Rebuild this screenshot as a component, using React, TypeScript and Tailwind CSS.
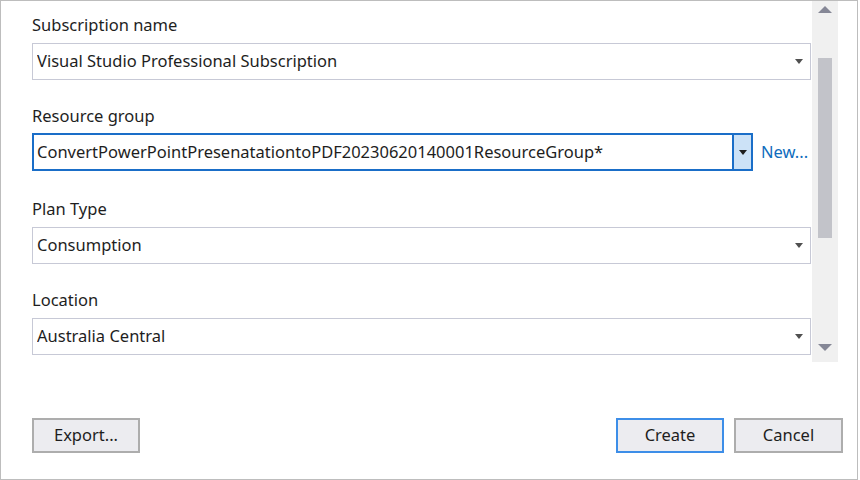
const font = "font-['Noto_Sans','Open_Sans',sans-serif]";

function Caret({ className = "" }: { className?: string }) {
  return (
    <svg width="8" height="5" viewBox="0 0 8 5" className={className}>
      <path d="M0 0H8L4 5Z" fill="currentColor" />
    </svg>
  );
}

function Field({ label, value, className = "" }: { label: string; value: string; className?: string }) {
  return (
    <div className={`flex flex-col ${className}`}>
      <div className="h-[22px] leading-[22px] mb-[7px] text-[16.5px] text-[#1e1e1e]">{label}</div>
      <div className="h-[37px] flex items-center border border-[#c7c9d6] bg-white pl-[4px] pr-[6px]">
        <span className="flex-1 text-[16.5px] text-[#1e1e1e] truncate">{value}</span>
        <Caret className="text-[#505050] mr-[1px]" />
      </div>
    </div>
  );
}

export default function App() {
  return (
    <div className={`${font} w-[858px] h-[480px] border border-[#bdbdbd] bg-white flex flex-col`}>
      <div className="flex h-[361px]">
        <div className="flex-1 flex flex-col gap-[25px] pl-[31px] pr-[1px] pt-[13px]">
          <Field label="Subscription name" value="Visual Studio Professional Subscription" />

          <div className="flex flex-col">
            <div className="h-[22px] leading-[22px] mb-[6px] text-[16.5px] text-[#1e1e1e]">Resource group</div>
            <div className="flex items-center gap-[8px]">
              <div className="w-[721px] h-[38px] flex border-2 border-[#1a6ec8] bg-white">
                <div className="flex-1 flex items-center pl-[3px] text-[16.5px] text-[#1e1e1e] truncate">
                  ConvertPowerPointPresenatationtoPDF20230620140001ResourceGroup*
                </div>
                <div className="w-[19px] border-l-2 border-[#1a6ec8] bg-[#cce2f7] flex items-center justify-center">
                  <Caret className="text-[#1e1e1e]" />
                </div>
              </div>
              <span className="text-[16.5px] text-[#0f6cbd]">New...</span>
            </div>
          </div>

          <Field label="Plan Type" value="Consumption" className="mt-[2px]" />
          <Field label="Location" value="Australia Central" />
        </div>

        <div className="w-[26px] bg-[#f0f0f0] flex flex-col items-center">
          <svg width="14" height="7" viewBox="0 0 14 7" className="mt-[5px] text-[#858796]">
            <path d="M0 7L7 0L14 7Z" fill="currentColor" />
          </svg>
          <div className="w-[14px] h-[180px] mt-[45px] bg-[#c2c3c9]" />
          <div className="flex-1" />
          <svg width="14" height="7" viewBox="0 0 14 7" className="mb-[11px] text-[#858796]">
            <path d="M0 0L14 0L7 7Z" fill="currentColor" />
          </svg>
        </div>
        <div className="w-[19px]" />
      </div>

      <div className="flex items-center gap-[10px] pl-[31px] pr-[14px] mt-[56px] text-[16.5px] text-[#1e1e1e]">
        <button className="w-[108px] h-[35px] bg-[#ececf0] border-2 border-[#adadad]">Export...</button>
        <div className="flex-1" />
        <button className="w-[108px] h-[35px] bg-[#ececf0] border-2 border-[#3d8ee8]">Create</button>
        <button className="w-[109px] h-[35px] bg-[#ececf0] border-2 border-[#adadad]">Cancel</button>
      </div>
    </div>
  );
}
